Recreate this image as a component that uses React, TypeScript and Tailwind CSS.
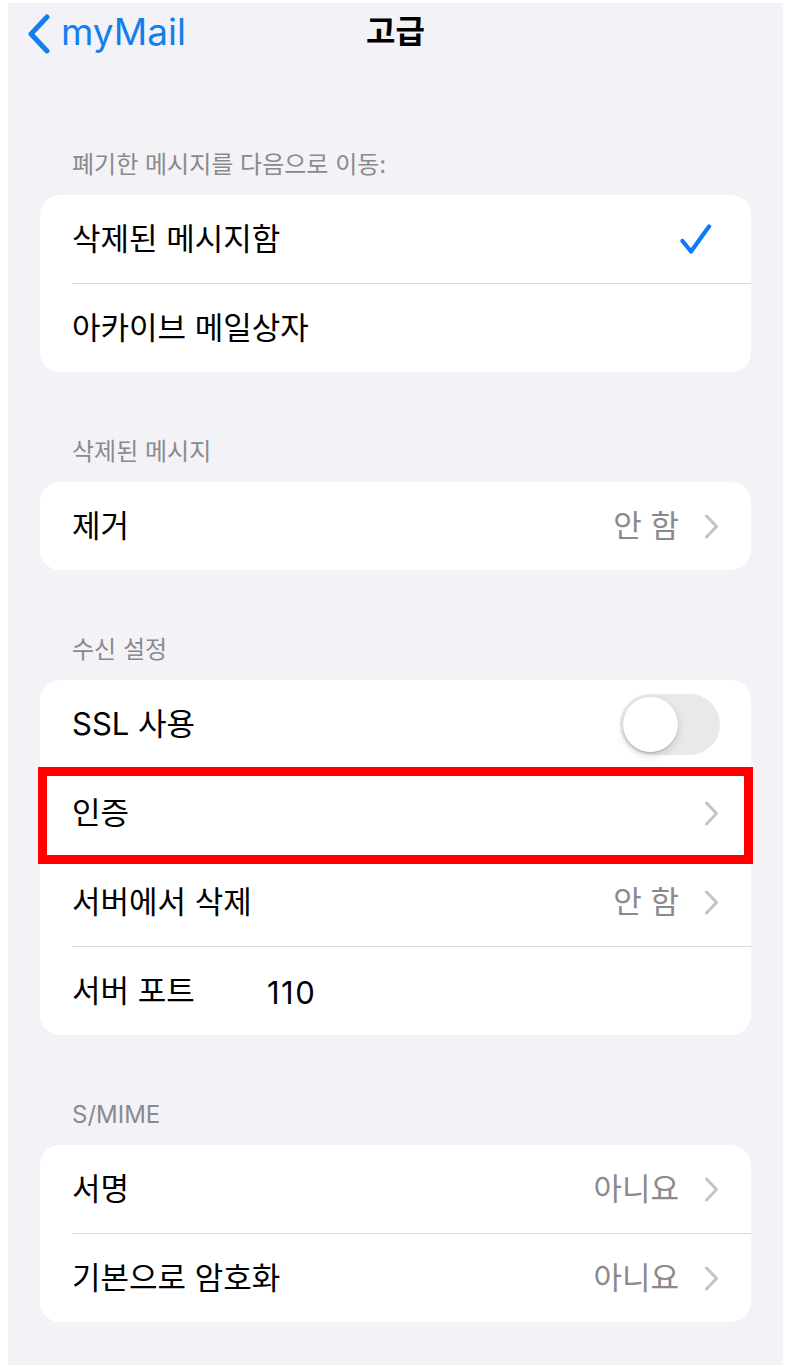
import React from "react";

const font = { fontFamily: '"Inter", "Noto Sans CJK KR", sans-serif' };

function Chevron() {
  return (
    <svg width="15" height="25" viewBox="0 0 15 25" className="shrink-0">
      <polyline points="2.5,2 12.5,12.5 2.5,23" fill="none" stroke="#c4c4c7" strokeWidth="3" strokeLinecap="round" strokeLinejoin="round" />
    </svg>
  );
}

function Check() {
  return (
    <svg width="32" height="31" viewBox="0 0 32 31" className="shrink-0">
      <polyline points="2.5,17 11,27.5 29,2.5" fill="none" stroke="#0a7aff" strokeWidth="4.2" strokeLinecap="round" strokeLinejoin="round" />
    </svg>
  );
}

function Toggle() {
  return (
    <div className="relative w-[100px] h-[61px] rounded-full bg-[#e9e9eb]">
      <div className="absolute left-[3px] top-[3px] w-[55px] h-[55px] rounded-full bg-white shadow-[0_3px_8px_rgba(0,0,0,0.15),0_1px_1px_rgba(0,0,0,0.16)]" />
    </div>
  );
}

function SectionHeader({ text, first }: { text: string; first?: boolean }) {
  return (
    <div className={(first ? "h-[130px]" : "h-[110px]") + " flex items-end pb-[16px] pl-[32px]"}>
      <span className="text-[24px] leading-[28px] text-[#8a8a8e]">{text}</span>
    </div>
  );
}

function Row({ label, value, right, divider }: { label: React.ReactNode; value?: string; right?: React.ReactNode; divider?: boolean }) {
  return (
    <div className="flex flex-col">
      <div className="h-[88px] flex items-center justify-between pl-[32px] pr-[32px]">
        <span className="text-[31px] leading-[36px] text-black">{label}</span>
        <div className="flex items-center gap-[25px]">
          {value && <span className="text-[31px] leading-[36px] text-[#8a8a8e]">{value}</span>}
          {right}
        </div>
      </div>
      {divider && <div className="ml-[32px] h-[1px] bg-[#dcdce0]" />}
    </div>
  );
}

export default function App() {
  return (
    <div className="min-h-screen bg-white pt-[3px] pl-[8px] pr-[7px]" style={font}>
      <div className="bg-[#f2f2f7] min-h-[1362px] pb-[40px]">
        <div className="relative h-[62px] flex items-center pl-[19px]">
          <div className="flex items-center gap-[10px]">
            <svg width="24" height="40" viewBox="0 0 24 40">
              <polyline points="20,3 4,20 20,37" fill="none" stroke="#147ef0" strokeWidth="5" strokeLinecap="round" strokeLinejoin="round" />
            </svg>
            <span className="text-[37px] leading-[44px] text-[#147ef0] -mt-[4px]">myMail</span>
          </div>
          <div className="absolute inset-0 flex items-center justify-center">
            <span className="text-[32px] leading-[40px] font-semibold text-black -mt-[4px]">고급</span>
          </div>
        </div>

        <div className="px-[32px]">
          <SectionHeader text="폐기한 메시지를 다음으로 이동:" first />
          <div className="bg-white rounded-[20px] overflow-hidden">
            <Row label="삭제된 메시지함" right={<div className="mr-[7px]"><Check /></div>} divider />
            <Row label="아카이브 메일상자" />
          </div>

          <SectionHeader text="삭제된 메시지" />
          <div className="bg-white rounded-[20px] overflow-hidden">
            <Row label="제거" value="안 함" right={<Chevron />} />
          </div>

          <SectionHeader text="수신 설정" />
          <div className="bg-white rounded-[20px]">
            <div className="flex flex-col">
              <div className="h-[88px] flex items-center justify-between pl-[32px] pr-[31px]">
                <span className="text-[31px] leading-[36px] text-black">SSL 사용</span>
                <Toggle />
              </div>
              <div className="ml-[32px] h-[1px] bg-[#dcdce0]" />
            </div>
            <div className="relative">
              <Row label="인증" right={<Chevron />} divider />
              <div className="absolute -left-[2px] -right-[2px] -top-[2px] -bottom-[6px] border-[9px] border-[#ff0000]" />
            </div>
            <Row label="서버에서 삭제" value="안 함" right={<Chevron />} divider />
            <div className="h-[88px] flex items-center pl-[32px]">
              <span className="text-[31px] leading-[36px] text-black w-[195px]">서버 포트</span>
              <span className="text-[31px] leading-[36px] text-black mt-[4px] tracking-[1.5px]">110</span>
            </div>
          </div>

          <SectionHeader text="S/MIME" />
          <div className="bg-white rounded-[20px] overflow-hidden">
            <Row label="서명" value="아니요" right={<Chevron />} divider />
            <Row label="기본으로 암호화" value="아니요" right={<Chevron />} />
          </div>
        </div>
      </div>
    </div>
  );
}
